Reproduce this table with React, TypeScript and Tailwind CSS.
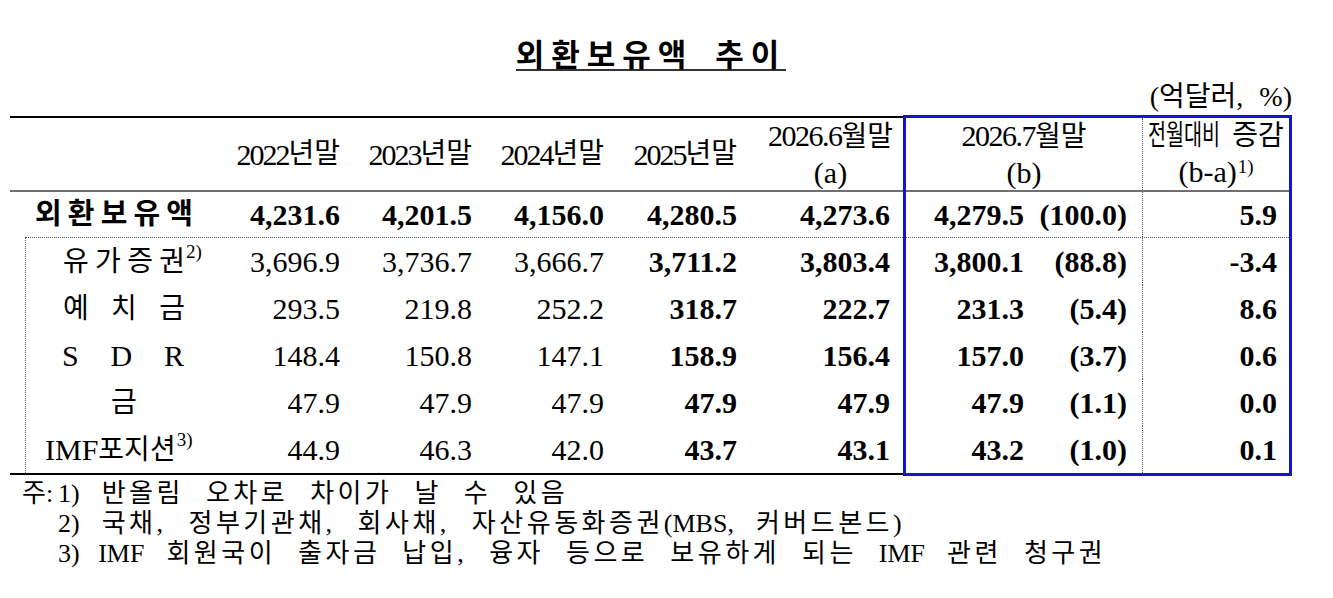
import React from 'react';

// 외환보유액 추이 table (unit: 억달러, %)
const blue = 'border-[#1414cf]';

const subRows = [
  { label: 'sec', v: ['3,696.9', '3,736.7', '3,666.7', '3,711.2', '3,803.4'], b: '3,800.1', p: '(88.8)', d: '-3.4' },
  { label: 'dep', v: ['293.5', '219.8', '252.2', '318.7', '222.7'], b: '231.3', p: '(5.4)', d: '8.6' },
  { label: 'sdr', v: ['148.4', '150.8', '147.1', '158.9', '156.4'], b: '157.0', p: '(3.7)', d: '0.6' },
  { label: 'gold', v: ['47.9', '47.9', '47.9', '47.9', '47.9'], b: '47.9', p: '(1.1)', d: '0.0' },
  { label: 'imf', v: ['44.9', '46.3', '42.0', '43.7', '43.1'], b: '43.2', p: '(1.0)', d: '0.1' },
];

const colW = ['w-[138px]', 'w-[132px]', 'w-[132px]', 'w-[133px]', 'w-[156px]'];
const colPr = ['pr-[10px]', 'pr-[10px]', 'pr-[10px]', 'pr-[10px]', 'pr-[13px]'];

function Spread({ chars, className = '' }: { chars: string[]; className?: string }) {
  return (
    <div className={`flex w-[122px] justify-between ${className}`}>
      {chars.map((c, i) => (
        <span key={i}>{c}</span>
      ))}
    </div>
  );
}

function Sup({ children }: { children: React.ReactNode }) {
  return <sup className="ml-[1px] text-[19px]">{children}</sup>;
}

// latin bits in the notes keep normal spacing
function L({ children }: { children: React.ReactNode }) {
  return <span className="tracking-normal">{children}</span>;
}

function SubLabel({ kind }: { kind: string }) {
  if (kind === 'sec')
    return (
      <div className="flex items-center pl-[37px]">
        <Spread chars={['유', '가', '증', '권']} className="text-[28px]" />
        <Sup>2)</Sup>
      </div>
    );
  if (kind === 'dep')
    return (
      <div className="flex items-center pl-[37px]">
        <Spread chars={['예', '치', '금']} className="text-[28px]" />
      </div>
    );
  if (kind === 'sdr')
    return (
      <div className="flex items-center pl-[36px]">
        <Spread chars={['S', 'D', 'R']} />
      </div>
    );
  if (kind === 'gold')
    return (
      <div className="ml-[37px] flex w-[122px] items-center justify-center text-[28px]">
        금
      </div>
    );
  return (
    <div className="flex items-center whitespace-nowrap pl-[19px]">
      <span>IMF</span>
      <span className="text-[28px]">포지션</span>
      <Sup>3)</Sup>
    </div>
  );
}

function YearHead({ year, w }: { year: string; w: string }) {
  return (
    <div className={`flex h-full items-center justify-end pr-[10px] ${w}`}>
      <span className="tracking-[-2px]">{year}</span>
      <span className="text-[28px]">년말</span>
    </div>
  );
}

export default function App() {
  return (
    <div className="h-[598px] w-[1333px] overflow-hidden bg-white text-[30px] text-black font-['Liberation_Serif','Noto_Sans_CJK_KR',serif]">
      <div className="h-[37px]" />
      {/* Title */}
      <div className="ml-[10px] flex h-[34px] w-[1282px] justify-center">
        <span className="inline-block border-b-2 border-[#333] pb-[1px] text-[31px] leading-[31px] font-bold tracking-[7px] [word-spacing:8px] font-['Noto_Sans_CJK_KR',sans-serif]">
          외환보유액 추이
        </span>
      </div>
      {/* Unit */}
      <div className="ml-[10px] flex h-[45px] w-[1282px] items-center justify-end pt-[7px] text-[28px] leading-none">
        <span>(억달러,</span>
        <span className="ml-[16px]">%)</span>
      </div>

      {/* Table */}
      <div className="ml-[10px] flex items-start">
        {/* left block */}
        <div className="w-[893px] border-t-2 border-b-2 border-black">
          <div className="flex h-[74px] border-b-2 border-[#707070]">
            <div className="w-[202px]" />
            <YearHead year="2022" w="w-[138px]" />
            <YearHead year="2023" w="w-[132px]" />
            <YearHead year="2024" w="w-[132px]" />
            <YearHead year="2025" w="w-[133px]" />
            <div className="flex h-full w-[156px] items-center justify-end pr-[10px]">
              <div className="flex flex-col items-center leading-[36px]">
                <div>
                  <span className="tracking-[-1.5px]">2026.6</span>
                  <span className="text-[28px]">월말</span>
                </div>
                <div>(a)</div>
              </div>
            </div>
          </div>

          <div className="flex h-[45px] items-center font-bold">
            <div className="w-[202px] pl-[25px]">
              <div className="flex w-[158px] justify-between text-[29px]">
                {['외', '환', '보', '유', '액'].map((c) => (
                  <span key={c}>{c}</span>
                ))}
              </div>
            </div>
            {['4,231.6', '4,201.5', '4,156.0', '4,280.5', '4,273.6'].map((v, i) => (
              <div key={i} className={`text-right ${colW[i]} ${colPr[i]}`}>
                {v}
              </div>
            ))}
          </div>

          <div className="ml-[15px] border-l border-t border-dotted border-[#555]">
            {subRows.map((r) => (
              <div key={r.label} className="flex h-[47px] items-center">
                <div className="w-[186px]">
                  <SubLabel kind={r.label} />
                </div>
                {r.v.map((v, i) => (
                  <div key={i} className={`text-right ${colW[i]} ${colPr[i]} ${i >= 3 ? 'font-bold' : ''}`}>
                    {v}
                  </div>
                ))}
              </div>
            ))}
          </div>
        </div>

        {/* highlighted block */}
        <div className={`-mt-px w-[389px] border-[3px] ${blue}`}>
          <div className="flex h-[74px] border-b-2 border-[#707070]">
            <div className="flex w-[237px] flex-col items-center justify-center border-r border-dotted border-[#555] leading-[36px]">
              <div>
                <span className="tracking-[-1.5px]">2026.7</span>
                <span className="text-[28px]">월말</span>
              </div>
              <div>(b)</div>
            </div>
            <div className="flex w-[146px] flex-col items-center justify-center leading-[36px]">
              <div className="flex items-center whitespace-nowrap text-[28px]">
                <span className="inline-block w-[78px]">
                  <span className="inline-block origin-left scale-x-[0.7]">전월대비</span>
                </span>
                <span className="ml-[6px]">증감</span>
              </div>
              <div>
                (b-a)<Sup>1)</Sup>
              </div>
            </div>
          </div>

          <div className="flex h-[46px] items-center border-b border-dotted border-[#555] font-bold">
            <div className="flex h-full w-[237px] items-center border-r border-dotted border-[#555]">
              <div className="w-[124px] pr-[6px] text-right">4,279.5</div>
              <div className="w-[112px] pr-[15px] text-right">(100.0)</div>
            </div>
            <div className="w-[146px] pr-[12px] text-right">5.9</div>
          </div>

          {subRows.map((r) => (
            <div key={r.label} className="flex h-[47px] items-center font-bold">
              <div className="flex h-full w-[237px] items-center border-r border-dotted border-[#555]">
                <div className="w-[124px] pr-[6px] text-right">{r.b}</div>
                <div className="w-[112px] pr-[15px] text-right">{r.p}</div>
              </div>
              <div className="w-[146px] pr-[12px] text-right">{r.d}</div>
            </div>
          ))}
        </div>
      </div>

      {/* Notes */}
      <div className="mt-[3px] whitespace-nowrap pl-[22px] text-[26px] leading-[30px] tracking-[3.5px] [word-spacing:12px]">
        <div className="flex">
          <span className="w-[36px] tracking-normal">주:</span>
          <span>
            <L>1)</L> 반올림 오차로 차이가 날 수 있음
          </span>
        </div>
        <div className="pl-[36px]">
          <L>2)</L> 국채, 정부기관채, 회사채, 자산유동화증권<L>(MBS,</L> 커버드본드<L>)</L>
        </div>
        <div className="pl-[36px]">
          <L>3) IMF</L> 회원국이 출자금 납입, 융자 등으로 보유하게 되는 <L>IMF</L> 관련 청구권
        </div>
      </div>
    </div>
  );
}
